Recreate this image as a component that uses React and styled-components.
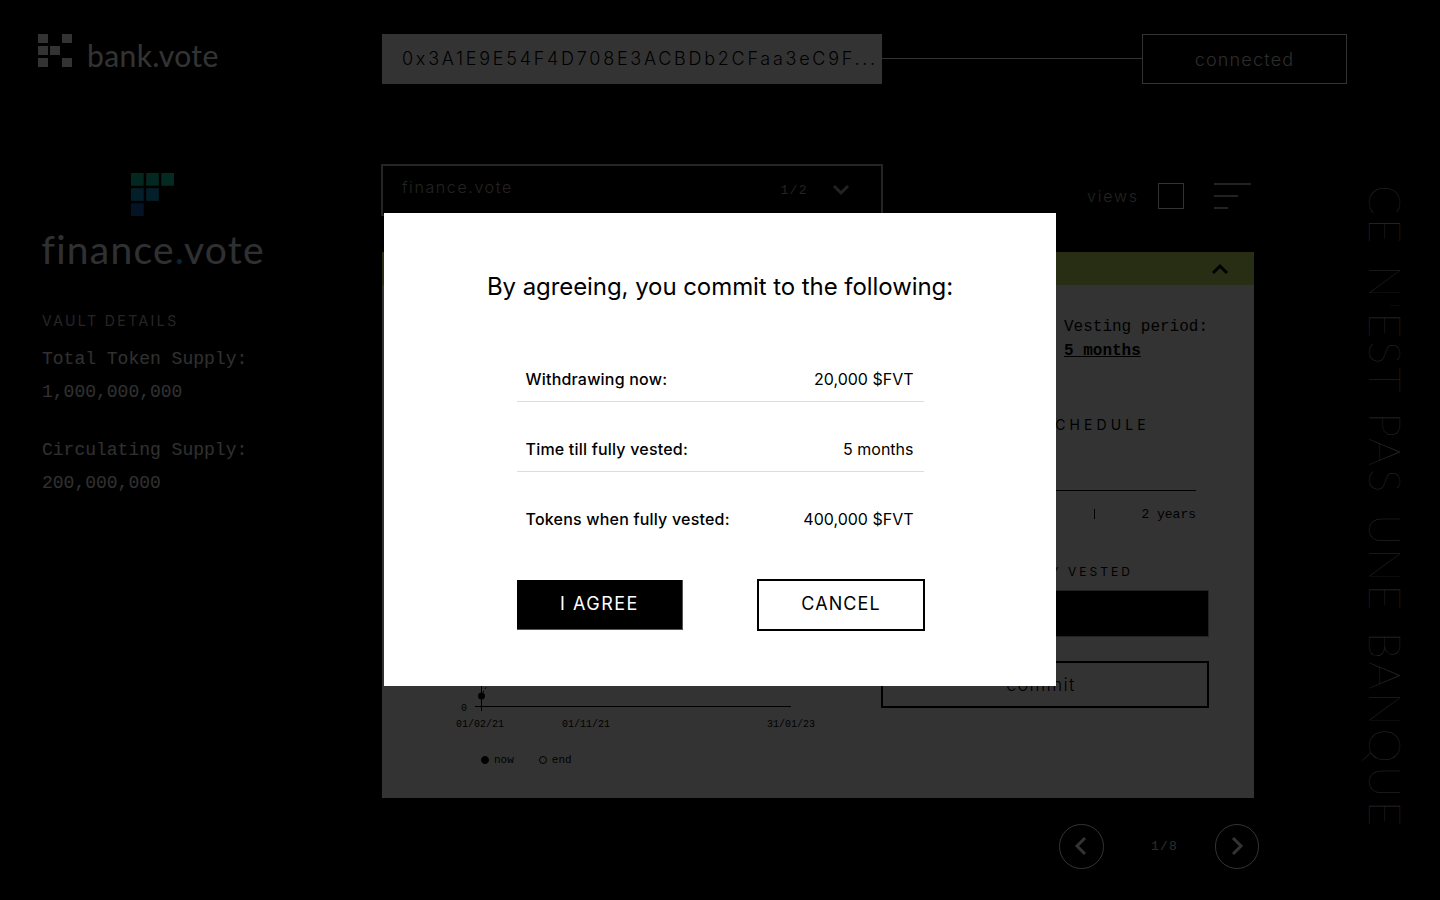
import React from 'react';
import styled, { createGlobalStyle } from 'styled-components';

const Global = createGlobalStyle`
  html, body { margin: 0; padding: 0; background: #000; }
  * { box-sizing: border-box; }
`;
const SANS = `"Inter", "Liberation Sans", sans-serif`;
const MONO = `"Liberation Mono", monospace`;
const LOGO = `"Lato", "Open Sans", sans-serif`;

const Page = styled.div`
  position: relative; width: 1440px; height: 900px; overflow: hidden;
  background: #000; color: #fff; display: flex; flex-direction: column;
`;
const Header = styled.header`display: flex; align-items: center; padding: 34px 0 0 38px; height: 84px;`;
const BankBrand = styled.div`display: flex; align-items: flex-end; width: 344px; height: 50px; gap: 15px; padding-bottom: 17px;`;
const BankMark = styled.svg`width: 34px; height: 33px;`;
const BankName = styled.span`font: 400 30px/30px ${LOGO}; letter-spacing: 0.4px; color: #fff; margin-bottom: -3px;`;
const Address = styled.div`
  width: 500px; height: 50px; padding: 0 0 0 20px; background: #fff; color: #000;
  font: 300 18px/50px ${SANS}; letter-spacing: 2.73px; white-space: nowrap;
`;
const Connector = styled.div`width: 260px; height: 1px; background: #fff; margin-top: -2px;`;
const Status = styled.div`
  width: 205px; height: 50px; border: 1px solid #fff; text-align: center;
  font: 300 18px/50px ${SANS}; letter-spacing: 1.2px; color: #d8d8d8;
`;
const Content = styled.div`display: flex; margin-top: 80px;`;
const Sidebar = styled.aside`width: 382px; padding: 9px 0 0 42px; display: flex; flex-direction: column;`;
const FinanceBrand = styled.div`width: 222px; display: flex; flex-direction: column; align-items: center;`;
const FinanceMark = styled.svg`width: 43px; height: 43px; margin-left: -2px;`;
const FinanceName = styled.div`font: 400 39px/40px ${LOGO}; letter-spacing: 1.25px; color: #e6f0f8; margin-top: 13px; white-space: nowrap;`;
const Dot = styled.span`color: #30b8f0;`;
const SideHeading = styled.h3`margin: 42px 0 0; font: 400 14px/20px ${SANS}; letter-spacing: 2.45px; color: #bbb;`;
const StatBlock = styled.div`margin-top: ${p => p.$top}px; font: 400 18px/33px ${MONO}; color: #eee;`;
const Main = styled.main`width: 872px; display: flex; flex-direction: column;`;
const TopRow = styled.div`display: flex; height: 88px;`;
const Select = styled.div`
  width: 502px; height: 52px; margin-left: -1px; border: 2px solid #bbb; display: flex; align-items: center;
  padding: 0 31px 6px 19px; font: 300 16px/20px ${SANS}; letter-spacing: 1.6px; color: #aaa;
`;
const SelectName = styled.span`flex: 1;`;
const SelectCount = styled.span`font: 400 13px/20px ${MONO}; letter-spacing: 1.4px; margin: 8px 24px 0 0;`;
const SelectChevron = styled.svg`width: 18px; height: 12px; margin-top: 6px;`;
const Views = styled.div`display: flex; align-items: flex-start; margin: 19px -6px 0 204px;`;
const ViewsLabel = styled.span`font: 300 16px/26px ${SANS}; letter-spacing: 1.8px; color: #aaa; margin-right: 19px;`;
const ViewSquare = styled.div`width: 26px; height: 26px; border: 1px solid #fff; margin-right: 30px;`;
const ViewBars = styled.div`display: flex; flex-direction: column; gap: 10px;`;
const ViewBar = styled.div`height: 2px; background: #aaa; width: ${p => p.$w}px;`;
const Panel = styled.section`height: 546px; display: flex; flex-direction: column; background: #fff;`;
const PanelHead = styled.div`
  height: 33px; background: #c3e65f; display: flex; align-items: center; justify-content: flex-end; padding-right: 25px;
`;
const PanelChevron = styled.svg`width: 18px; height: 12px;`;
const PanelBody = styled.div`flex: 1; display: grid; grid-template-columns: 499px 328px; color: #000;`;
const ChartCol = styled.div`display: flex; flex-direction: column; justify-content: flex-end; padding-bottom: 30px;`;
const Chart = styled.svg`width: 499px; height: 102px; margin-bottom: 10px; font-family: ${MONO};`;
const Legend = styled.div`display: flex; padding-left: 99px; font: 400 11px/16px ${MONO};`;
const LegendItem = styled.span`display: flex; align-items: center; gap: 5px; margin-right: 25px;`;
const LegendDot = styled.i`
  width: 8px; height: 8px; border-radius: 50%; border: 1.5px solid #000;
  background: ${p => (p.$filled ? '#000' : 'transparent')};
`;
const FormCol = styled.div`display: flex; flex-direction: column; padding-top: 30px;`;
const Facts = styled.div`display: grid; grid-template-columns: 183px 1fr; font: 400 16px/24px ${MONO};`;
const FactValue = styled.div`font-weight: 700; text-decoration: underline;`;
const FormHeading = styled.h4`margin: ${p => p.$top}px 0 0; font: 400 ${p => p.$size}px/20px ${SANS}; letter-spacing: ${p => p.$spacing}px; white-space: nowrap;`;
const Track = styled.div`width: 315px; height: 1px; background: #000; margin-top: 55px;`;
const Scale = styled.div`width: 315px; display: flex; justify-content: flex-end; align-items: center; gap: 46px; margin-top: 17px; font: 400 13px/14px ${MONO};`;
const Tick = styled.i`width: 1px; height: 10px; background: #000; margin-top: -3px;`;
const Field = styled.div`width: 328px; height: 47px; background: #000; margin-top: 8px; border: 1px solid #aaa;`;
const Commit = styled.button`
  width: 328px; height: 47px; margin-top: 24px; background: transparent; border: 2px solid #000; border-radius: 0;
  padding: 0 8px 0 0; font: 300 18px/43px ${SANS}; letter-spacing: 1.3px; color: #000;
`;
const Pager = styled.nav`display: flex; justify-content: flex-end; align-items: center; margin: 26px -5px 0 0;`;
const PagerButton = styled.div`width: 44.5px; height: 44.5px; border: 1px solid #fff; border-radius: 50%; display: flex; align-items: center; justify-content: center;`;
const PagerIcon = styled.svg`width: 14px; height: 20px;`;
const PagerCount = styled.span`width: 111px; text-align: center; font: 400 13px/16px ${MONO}; letter-spacing: 1.2px; color: #ddd; padding: 2px 0 0 11px;`;
const Rail = styled.div`
  margin: 21px 0 0 115px; writing-mode: vertical-rl; white-space: nowrap;
  font: 100 44px/33px ${LOGO}; letter-spacing: 3px; word-spacing: 3px; color: #ccc; width: 33px; height: 640px;
`;
const Overlay = styled.div`
  position: absolute; inset: 0 0 1px; background: rgba(0,0,0,.8); box-shadow: 0 1px 0 rgba(0,0,0,.8);
  display: flex; align-items: center; justify-content: center;
`;
const Modal = styled.div`
  width: 672px; height: 473px; background: #fff; color: #000; display: flex; flex-direction: column; align-items: center; padding-top: 56px;
`;
const ModalTitle = styled.h2`margin: 0; font: 400 24px/36px ${SANS}; color: #000; letter-spacing: -.07px;`;
const Rows = styled.div`width: 407px; margin-top: 27px; display: flex; flex-direction: column;`;
const Row = styled.div`
  height: 70px; display: flex; justify-content: space-between; align-items: center; padding: 25px 10px 0 9px;
  font: 500 16px/24px ${SANS}; letter-spacing: .2px; border-bottom: 1px solid ${p => (p.$last ? 'transparent' : '#ddd')};
`;
const RowValue = styled.span`font-weight: 400; letter-spacing: 0;`;
const Buttons = styled.div`width: 408px; margin: 37px 0 0 2px; display: flex; justify-content: space-between; align-items: center;`;
const Agree = styled.button`
  width: 166px; height: 50px; padding: 0 0 2px; background: #000; color: #fff; border: 0; border-radius: 0; border-right: 1px solid #555; border-bottom: 1px solid #555;
  font: 400 18px/1 ${SANS}; letter-spacing: 1.5px;
`;
const Cancel = styled.button`
  width: 168px; height: 52px; padding: 0 0 2px; background: #fff; color: #000; border: 2px solid #000; border-radius: 0;
  font: 400 18px/1 ${SANS}; letter-spacing: 1.1px;
`;

const App = () => (
  <Page>
    <Global />
    <Header>
      <BankBrand>
        <BankMark viewBox="0 0 34 33" fill="#fff">
          <rect x="0" y="0" width="10" height="9" /><rect x="24" y="0" width="10" height="9" />
          <rect x="0" y="12" width="10" height="9" /><rect x="12" y="12" width="10" height="9" />
          <rect x="0" y="24" width="10" height="9" /><rect x="24" y="24" width="10" height="9" />
        </BankMark>
        <BankName>bank.vote</BankName>
      </BankBrand>
      <Address>0x3A1E9E54F4D708E3ACBDb2CFaa3eC9F...</Address>
      <Connector />
      <Status>connected</Status>
    </Header>
    <Content>
      <Sidebar>
        <FinanceBrand>
          <FinanceMark viewBox="0 0 44 44">
            <rect x="0" y="0" width="13" height="13" fill="#12c9a0" /><rect x="15.5" y="0" width="13" height="13" fill="#12c9a0" /><rect x="31" y="0" width="13" height="13" fill="#14d8ac" />
            <rect x="0" y="15.5" width="13" height="13" fill="#10a0d0" /><rect x="15.5" y="15.5" width="13" height="13" fill="#10a0d0" />
            <rect x="0" y="31" width="13" height="13" fill="#1a5fc0" />
          </FinanceMark>
          <FinanceName>finance<Dot>.</Dot>vote</FinanceName>
        </FinanceBrand>
        <SideHeading>VAULT DETAILS</SideHeading>
        <StatBlock $top={12}>Total Token Supply:<br />1,000,000,000</StatBlock>
        <StatBlock $top={25}>Circulating Supply:<br />200,000,000</StatBlock>
      </Sidebar>
      <Main>
        <TopRow>
          <Select>
            <SelectName>finance.vote</SelectName>
            <SelectCount>1/2</SelectCount>
            <SelectChevron viewBox="0 0 18 12" fill="none" stroke="#aaa" strokeWidth="3"><polyline points="2,2 9,9 16,2" /></SelectChevron>
          </Select>
          <Views>
            <ViewsLabel>views</ViewsLabel>
            <ViewSquare />
            <ViewBars><ViewBar $w={37} /><ViewBar $w={24} /><ViewBar $w={14} /></ViewBars>
          </Views>
        </TopRow>
        <Panel>
          <PanelHead>
            <PanelChevron viewBox="0 0 18 12" fill="none" stroke="#000" strokeWidth="3"><polyline points="2,10 9,3 16,10" /></PanelChevron>
          </PanelHead>
          <PanelBody>
            <ChartCol>
              <Chart viewBox="0 0 499 102">
                <line x1="93" y1="66.5" x2="409" y2="66.5" stroke="#000" />
                <line x1="99.5" y1="30" x2="99.5" y2="71" stroke="#000" />
                <line x1="99" y1="56" x2="107" y2="42" stroke="#000" strokeDasharray="2 2" />
                <circle cx="99.5" cy="56" r="3.5" fill="#000" />
                <text x="79" y="71" fontSize="10" fill="#000">0</text>
                <text x="74" y="87" fontSize="10" fill="#000">01/02/21</text>
                <text x="180" y="87" fontSize="10" fill="#000">01/11/21</text>
                <text x="385" y="87" fontSize="10" fill="#000">31/01/23</text>
              </Chart>
              <Legend>
                <LegendItem><LegendDot $filled />now</LegendItem>
                <LegendItem><LegendDot />end</LegendItem>
              </Legend>
            </ChartCol>
            <FormCol>
              <Facts>
                <div>Vesting amount:<FactValue>20,000 $FVT</FactValue></div>
                <div>Vesting period:<FactValue>5 months</FactValue></div>
              </Facts>
              <FormHeading $top={52} $size={14} $spacing={4.1}>YOUR VESTING SCHEDULE</FormHeading>
              <Track />
              <Scale><Tick /><span>2 years</span></Scale>
              <FormHeading $top={40} $size={12} $spacing={3}>TOKENS WHEN FULLY VESTED</FormHeading>
              <Field />
              <Commit>commit</Commit>
            </FormCol>
          </PanelBody>
        </Panel>
        <Pager>
          <PagerButton><PagerIcon viewBox="0 0 14 20" fill="none" stroke="#fff" strokeWidth="3"><polyline points="11,2 3,10 11,18" /></PagerIcon></PagerButton>
          <PagerCount>1/8</PagerCount>
          <PagerButton><PagerIcon viewBox="0 0 14 20" fill="none" stroke="#fff" strokeWidth="3"><polyline points="3,2 11,10 3,18" /></PagerIcon></PagerButton>
        </Pager>
      </Main>
      <Rail>CE N'EST PAS UNE BANQUE</Rail>
    </Content>
    <Overlay>
      <Modal>
        <ModalTitle>By agreeing, you commit to the following:</ModalTitle>
        <Rows>
          <Row><span>Withdrawing now:</span><RowValue>20,000 $FVT</RowValue></Row>
          <Row><span>Time till fully vested:</span><RowValue>5 months</RowValue></Row>
          <Row $last><span>Tokens when fully vested:</span><RowValue>400,000 $FVT</RowValue></Row>
        </Rows>
        <Buttons>
          <Agree>I AGREE</Agree>
          <Cancel>CANCEL</Cancel>
        </Buttons>
      </Modal>
    </Overlay>
  </Page>
);

export default App;
